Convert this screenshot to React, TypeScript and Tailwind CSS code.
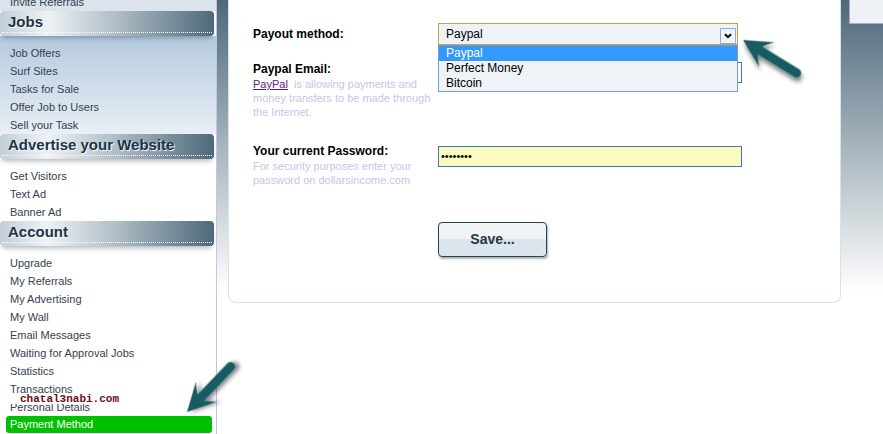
const jobLinks = ["Job Offers", "Surf Sites", "Tasks for Sale", "Offer Job to Users", "Sell your Task"];
const advertiseLinks = ["Get Visitors", "Text Ad", "Banner Ad"];
const accountLinks = [
  "Upgrade",
  "My Referrals",
  "My Advertising",
  "My Wall",
  "Email Messages",
  "Waiting for Approval Jobs",
  "Statistics",
  "Transactions",
  "Personal Details",
];

const payoutOptions = ["Paypal", "Perfect Money", "Bitcoin"];

function NavItem({ label }: { label: string }) {
  return (
    <div className="h-[18px] pl-[10px] text-[11px] leading-[18px] text-[#33414e] whitespace-nowrap">
      {label}
    </div>
  );
}

function SectionHeader({ title }: { title: string }) {
  return (
    <div className="relative z-10 mr-[2px] flex h-[25px] flex-col rounded-[4px] bg-[linear-gradient(to_right,#c2ced8_0%,#eef2f5_22%,#aebcc6_55%,#4d697a_100%)] shadow-[0_4px_5px_-2px_rgba(30,50,70,0.35)]">
      <div className="h-[21px] pl-[8px] pt-[2px] text-[15px] font-bold leading-[18px] text-[#1f3344] [text-shadow:1px_1px_1px_#ffffff]">
        {title}
      </div>
      <div className="mx-[2px] border-t border-dotted border-white" />
    </div>
  );
}

// arrow drawn pointing left from its tip, rotated into place
function Arrow({ x, y, angle }: { x: number; y: number; angle: number }) {
  return (
    <path
      transform={`translate(${x} ${y}) rotate(${angle})`}
      d="M0 0 L28 -14.5 Q22.5 -8.5 20 -4.5 L63 -4.5 A4.5 4.5 0 0 1 63 4.5 L20 4.5 Q22.5 8.5 28 14.5 Z"
      fill="#185c62"
      filter="url(#arrow-shadow)"
    />
  );
}

export default function App() {
  return (
    <div className="relative flex h-[434px] w-[883px] overflow-hidden bg-white font-['Liberation_Sans',Arial,sans-serif]">
      {/* Sidebar */}
      <aside className="w-[217px] shrink-0 overflow-hidden border-r border-[#c4c4ea]">
        <div className="-mt-[7px]">
          <div className="bg-[#dbe4ed]">
            <NavItem label="Invite Referrals" />
          </div>

          <SectionHeader title="Jobs" />
          <div className="bg-[linear-gradient(to_bottom,#b4cadf,#e9eff5)] pt-[8px]">
            {jobLinks.map((link) => (
              <NavItem key={link} label={link} />
            ))}
          </div>

          <SectionHeader title="Advertise your Website" />
          <div className="pt-[8px]">
            {advertiseLinks.map((link) => (
              <NavItem key={link} label={link} />
            ))}
          </div>

          <SectionHeader title="Account" />
          <div className="pt-[8px]">
            {accountLinks.map((link) => (
              <NavItem key={link} label={link} />
            ))}
            <div className="ml-[6px] mr-[4px] h-[17px] rounded-[3px] bg-[#00c000] pl-[4px] text-[11px] leading-[17px] text-white">
              Payment Method
            </div>
          </div>
        </div>
      </aside>

      {/* Main area */}
      <main className="flex flex-1 bg-[linear-gradient(to_bottom,#4d697a_0px,#ffffff_292px)]">
        <div className="ml-[11px] h-[303px] w-[613px] shrink-0 rounded-b-[8px] border border-t-0 border-[#d9e2ea] bg-white pl-[24px] pt-[23px]">
          {/* Payout method */}
          <div className="flex h-[22px] items-center">
            <div className="w-[185px] text-[12px] font-bold text-black">Payout method:</div>
            <div className="relative flex h-[22px] w-[300px] border border-[#c9a14c] bg-[#eef3f8] pl-[7px]">
              <span className="self-center text-[12px] text-black">Paypal</span>
              <div className="ml-auto mr-[1px] mt-[4px] flex h-[16px] w-[16px] items-center justify-center border border-[#89aed9] bg-[#eef3f8]">
                <svg width="8" height="6" viewBox="0 0 8 6">
                  <path d="M1 1.2 L4 4.2 L7 1.2" fill="none" stroke="#000" strokeWidth="2" />
                </svg>
              </div>
              <div className="absolute left-[-1px] top-[21px] z-20 w-[300px] border border-[#7b9bc3] bg-[#eef3f8]">
                {payoutOptions.map((option, index) => (
                  <div
                    key={option}
                    className={`h-[15px] pl-[7px] text-[12px] leading-[15px] ${
                      index === 0 ? "bg-[#3399ff] text-white" : "text-black"
                    }`}
                  >
                    {option}
                  </div>
                ))}
              </div>
            </div>
          </div>

          {/* Paypal email */}
          <div className="mt-[17px] flex items-start">
            <div className="w-[185px]">
              <div className="text-[12px] font-bold leading-[15px] text-black">Paypal Email:</div>
              <div className="text-[11px] leading-[14px] text-[#c6c6e6]">
                <span className="text-[#5b1d80] underline">PayPal</span>
                {"\u00a0 is allowing payments and"}
                <br />
                money transfers to be made through
                <br />
                the Internet.
              </div>
            </div>
            <div className="h-[21px] w-[304px] border border-[#3b7bb4] bg-white" />
          </div>

          {/* Password */}
          <div className="mt-[25px] flex items-start">
            <div className="w-[185px]">
              <div className="text-[12px] font-bold leading-[15px] text-black">Your current Password:</div>
              <div className="text-[11px] leading-[14px] text-[#c6c6e6]">
                For security purposes enter your
                <br />
                password on dollarsincome.com
              </div>
            </div>
            <div className="mt-[2px] flex h-[21px] w-[304px] items-center border border-[#3a7ab2] bg-[#fbfbbf] pl-[2px] text-[11px] text-black">
              ••••••••
            </div>
          </div>

          <button className="ml-[185px] mt-[35px] h-[35px] w-[109px] rounded-[4px] border border-[#274155] bg-[linear-gradient(to_bottom,#f0f4f7_50%,#dae5ed_50%)] text-[14px] font-bold text-[#213547] shadow-[1px_2px_2px_rgba(0,0,0,0.3)]">
            Save...
          </button>
        </div>

        <div className="flex-1 pl-[8px]">
          <div className="h-[24px] border-b border-l border-[#a9a9d3] bg-[#eef2f7]" />
        </div>
      </main>

      {/* Watermark */}
      <div className="absolute left-[6px] top-[394px] h-[10px] w-[118px] bg-white pl-[14px] font-['Liberation_Mono','Courier_New',monospace] text-[11px] font-bold leading-[10px] text-[#6e0a18]">
        chatal3nabi.com
      </div>

      {/* Arrows */}
      <svg className="pointer-events-none absolute inset-0 z-30" width="883" height="434">
        <defs>
          <filter id="arrow-shadow" x="-30%" y="-30%" width="160%" height="160%">
            <feDropShadow dx="3" dy="3" stdDeviation="2" floodColor="#000" floodOpacity="0.5" />
          </filter>
        </defs>
        <Arrow x={743} y={40} angle={31.6} />
        <Arrow x={187} y={412} angle={-46.2} />
      </svg>
    </div>
  );
}
